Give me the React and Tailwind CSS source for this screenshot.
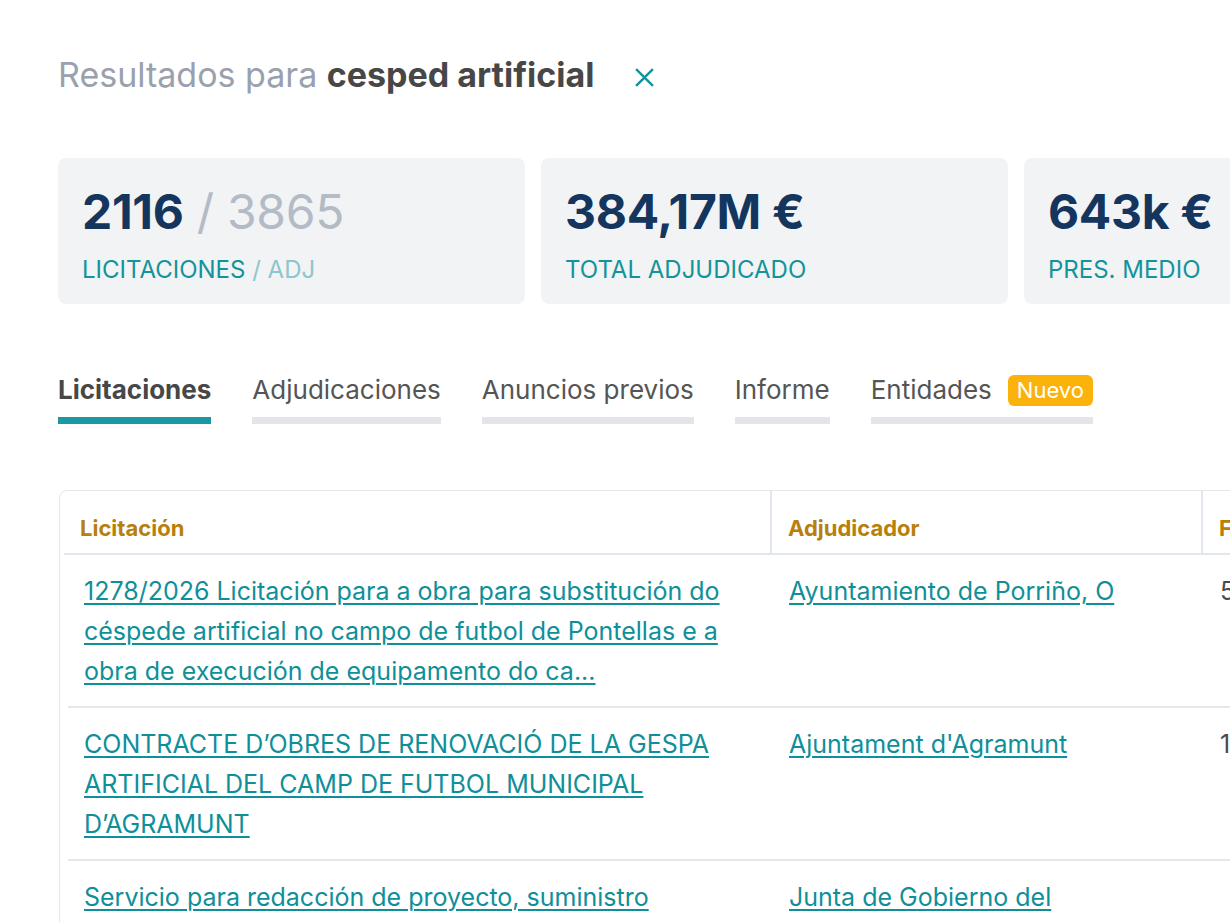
import React from 'react';

const stats = [
  { value: '2116', extra: '3865', label: 'LICITACIONES', extraLabel: 'ADJ' },
  { value: '384,17M €', label: 'TOTAL ADJUDICADO' },
  { value: '643k €', label: 'PRES. MEDIO' },
];

const tabs = [
  { name: 'Licitaciones', active: true },
  { name: 'Adjudicaciones' },
  { name: 'Anuncios previos' },
  { name: 'Informe' },
  { name: 'Entidades', badge: 'Nuevo' },
];

const rows = [
  {
    title: ['1278/2026 Licitación para a obra para substitución do', 'céspede artificial no campo de futbol de Pontellas e a', 'obra de execución de equipamento do ca...'],
    entity: 'Ayuntamiento de Porriño, O',
    date: '5 feb 2026',
  },
  {
    title: ['CONTRACTE D’OBRES DE RENOVACIÓ DE LA GESPA', 'ARTIFICIAL DEL CAMP DE FUTBOL MUNICIPAL', 'D’AGRAMUNT'],
    entity: "Ajuntament d'Agramunt",
    date: '12 ene 2026',
  },
  {
    title: ['Servicio para redacción de proyecto, suministro', 'e instalación de césped artificial en el campo', 'municipal de fútbol'],
    entity: 'Junta de Gobierno del',
    date: '',
  },
];

function StatCard({ stat }) {
  return (
    <div className="w-[467px] h-[146px] shrink-0 rounded-lg bg-[#f2f3f5] px-6 pt-[28px]">
      <div className="text-[48px] leading-[52px] font-bold text-[#14365e] whitespace-nowrap tracking-[-0.3px]">
        {stat.value}
        {stat.extra && (
          <span className="font-normal text-[#b3bbc7]"> / {stat.extra}</span>
        )}
      </div>
      <div className="mt-[18px] text-[24px] leading-[28px] text-[#13939b] whitespace-nowrap">
        {stat.label}
        {stat.extraLabel && <span className="text-[#8dc6cc]"> / {stat.extraLabel}</span>}
      </div>
    </div>
  );
}

export default function App() {
  return (
    <div className="w-[1230px] h-[922px] overflow-hidden bg-white font-['Inter',sans-serif]">
      <div className="pl-[58px] pt-[55px] w-[1600px]">
        {/* search heading */}
        <div className="flex items-center h-[40px]">
          <h1 className="text-[34px] leading-[40px] text-[#9aa1ae]">
            Resultados para <span className="font-bold text-[#474747]">cesped artificial</span>
          </h1>
          <button className="ml-[40px] mt-[4px] text-[#13929b]">
            <svg width="21" height="21" viewBox="0 0 20 20" fill="none" stroke="currentColor" strokeWidth="2.3">
              <path d="M2 2L18 18M18 2L2 18" />
            </svg>
          </button>
        </div>

        {/* stats */}
        <div className="mt-[63px] flex gap-4">
          {stats.map(s => <StatCard key={s.label} stat={s} />)}
        </div>

        {/* tabs */}
        <div className="mt-[70px] flex gap-[41px]">
          {tabs.map(t => (
            <div key={t.name} className="flex flex-col">
              <div className="flex items-center h-[32px]">
                <span className={`text-[26px] leading-[32px] ${t.active ? 'font-bold text-[#474747]' : 'text-[#555555]'}`}>
                  {t.name}
                </span>
                {t.badge && (
                  <span className="ml-4 h-[31px] px-[9px] rounded-md bg-[#fbb20a] text-white text-[22px] leading-[31px]">
                    {t.badge}
                  </span>
                )}
              </div>
              <div className={`mt-[11px] h-[7px] ${t.active ? 'bg-[#1a99a3]' : 'bg-[#e4e5ea]'}`} />
            </div>
          ))}
        </div>

        {/* results table */}
        <div className="mt-[66px] ml-px w-[1400px] border border-[#e4e7ec] rounded-lg pl-[4px]">
          <div className="flex h-[64px] border-b-2 border-[#e2e6ee] text-[22px] font-bold text-[#b8800a]">
            <div className="w-[708px] pl-4 pt-[21px] border-r-2 border-[#e2e6ee]">Licitación</div>
            <div className="w-[431px] pl-4 pt-[21px] border-r-2 border-[#e2e6ee]">Adjudicador</div>
            <div className="pl-4 pt-[21px]">Fecha</div>
          </div>
          <div className="pl-[4px]">
            {rows.map((r, i) => (
              <div key={i} className="flex border-b-2 border-[#e6e7eb] pt-4 pb-[15px] text-[25px] leading-10">
                <div className="w-[704px] pl-4">
                  <a href="#" className="text-[#0f8f99] underline underline-offset-[3px] decoration-[1.5px]">
                    {r.title.map((line, j) => (
                      <React.Fragment key={j}>
                        {j > 0 && <br />}
                        {line}
                      </React.Fragment>
                    ))}
                  </a>
                </div>
                <div className="w-[431px] pl-[17px]">
                  <a href="#" className="text-[#0f8f99] underline underline-offset-[3px] decoration-[1.5px]">
                    {r.entity}
                  </a>
                </div>
                <div className="pl-[17px] text-[#4a4a4a]">{r.date}</div>
              </div>
            ))}
          </div>
        </div>
      </div>
    </div>
  );
}
